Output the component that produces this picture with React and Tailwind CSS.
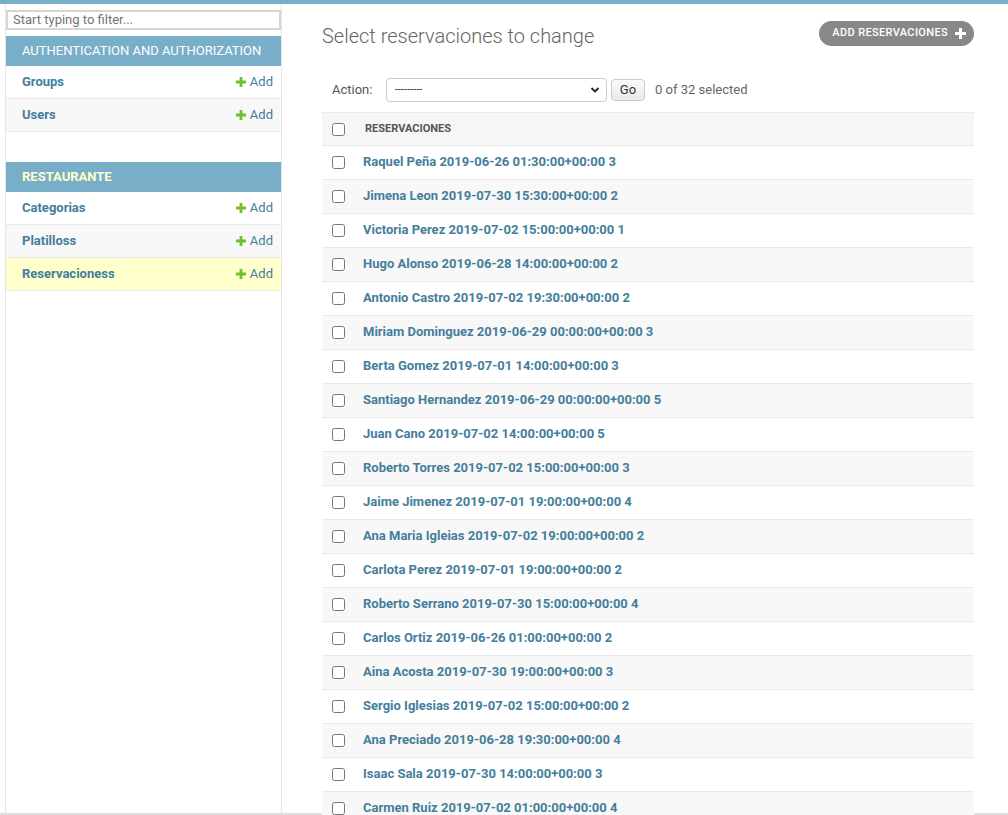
import React from "react";

const rows = [
  "Raquel Peña 2019-06-26 01:30:00+00:00 3",
  "Jimena Leon 2019-07-30 15:30:00+00:00 2",
  "Victoria Perez 2019-07-02 15:00:00+00:00 1",
  "Hugo Alonso 2019-06-28 14:00:00+00:00 2",
  "Antonio Castro 2019-07-02 19:30:00+00:00 2",
  "Miriam Dominguez 2019-06-29 00:00:00+00:00 3",
  "Berta Gomez 2019-07-01 14:00:00+00:00 3",
  "Santiago Hernandez 2019-06-29 00:00:00+00:00 5",
  "Juan Cano 2019-07-02 14:00:00+00:00 5",
  "Roberto Torres 2019-07-02 15:00:00+00:00 3",
  "Jaime Jimenez 2019-07-01 19:00:00+00:00 4",
  "Ana Maria Igleias 2019-07-02 19:00:00+00:00 2",
  "Carlota Perez 2019-07-01 19:00:00+00:00 2",
  "Roberto Serrano 2019-07-30 15:00:00+00:00 4",
  "Carlos Ortiz 2019-06-26 01:00:00+00:00 2",
  "Aina Acosta 2019-07-30 19:00:00+00:00 3",
  "Sergio Iglesias 2019-07-02 15:00:00+00:00 2",
  "Ana Preciado 2019-06-28 19:30:00+00:00 4",
  "Isaac Sala 2019-07-30 14:00:00+00:00 3",
  "Carmen Ruiz 2019-07-02 01:00:00+00:00 4",
];

function GreenPlus() {
  return (
    <svg width="10" height="10" viewBox="0 0 10 10" className="shrink-0">
      <path d="M3.6 0h2.8v3.6H10v2.8H6.4V10H3.6V6.4H0V3.6h3.6z" fill="#70bf2b" />
    </svg>
  );
}

function SideRow({ label, bg }) {
  return (
    <div className={`flex h-[33px] items-center justify-between border-b border-[#e8e8e8] pl-[16px] pr-[8px] ${bg}`}>
      <span className="text-[13px] font-bold text-[#447e9b]">{label}</span>
      <span className="flex items-center gap-[4px] text-[13px] text-[#447e9b]">
        <GreenPlus />
        Add
      </span>
    </div>
  );
}

export default function App() {
  return (
    <div className="flex h-[815px] flex-col overflow-hidden bg-white font-['Roboto',sans-serif] text-[13px] text-[#333]">
      <div className="h-[4px] shrink-0 bg-[#79aec8]" />
      <div className="flex min-h-0 flex-1 border-b-2 border-[#dedede]">
        <nav className="ml-[5px] w-[277px] shrink-0 border-l border-r border-[#e6e6e6]">
          <div className="pt-[6px]">
            <div className="flex h-[20px] items-center border-2 border-[#d6d6d6] bg-white pl-[5px] text-[13px] text-[#757575]">
              Start typing to filter...
            </div>
          </div>
          <div className="mt-[6px]">
            <div className="flex h-[30px] items-center bg-[#79aec8] pl-[16px] text-[13px] text-white">
              AUTHENTICATION AND AUTHORIZATION
            </div>
            <SideRow label="Groups" bg="bg-white" />
            <SideRow label="Users" bg="bg-[#f8f8f8]" />
          </div>
          <div className="mt-[30px]">
            <div className="flex h-[30px] items-center bg-[#79aec8] pl-[16px] text-[13px] font-bold text-[#ffffcc]">
              RESTAURANTE
            </div>
            <SideRow label="Categorias" bg="bg-white" />
            <SideRow label="Platilloss" bg="bg-[#f8f8f8]" />
            <SideRow label="Reservacioness" bg="bg-[#ffffcc]" />
          </div>
        </nav>

        <main className="min-w-0 flex-1 pl-[40px] pr-[34px] pt-[17px]">
          <div className="flex h-[27px] items-start justify-between">
            <h1 className="mt-[3px] text-[20px] font-light leading-[24px] text-[#666]">
              Select reservaciones to change
            </h1>
            <a className="flex h-[25px] items-center gap-[7px] rounded-full bg-[#888] pl-[13px] pr-[8px] text-[11px] font-medium tracking-[0.35px] text-white">
              ADD RESERVACIONES
              <svg width="11" height="11" viewBox="0 0 10 10">
                <path d="M3.6 0h2.8v3.6H10v2.8H6.4V10H3.6V6.4H0V3.6h3.6z" fill="#fff" />
              </svg>
            </a>
          </div>

          <div className="mt-[30px] flex h-[24px] items-center pl-[10px] text-[13px] text-[#555]">
            <span className="w-[54px]">Action:</span>
            <div className="flex h-[24px] w-[221px] items-center justify-between rounded-[4px] border border-[#ccc] bg-white pl-[8px] pr-[6px] text-[#333]">
              <span className="text-[11px]">---------</span>
              <svg width="10" height="10" viewBox="0 0 10 10">
                <path d="M1.5 3l3.5 3.5L8.5 3" fill="none" stroke="#222" strokeWidth="1.8" />
              </svg>
            </div>
            <div className="ml-[4px] flex h-[22px] w-[34px] items-center justify-center rounded-[4px] border border-[#ccc] bg-gradient-to-b from-[#fafafa] to-[#eaeaea] text-[13px] text-[#333]">
              Go
            </div>
            <span className="ml-[10px] text-[#666]">0 of 32 selected</span>
          </div>

          <div className="mt-[10px]">
            <div className="flex h-[34px] items-center border-y border-[#eaeaea] bg-[#f6f6f6] pt-[1px]">
              <div className="flex w-[31px] items-center pl-[10px]">
                <input type="checkbox" className="m-0 h-[13px] w-[13px]" readOnly />
              </div>
              <span className="pl-[12px] text-[11px] font-bold text-[#555]">RESERVACIONES</span>
            </div>
            {rows.map((r, i) => (
              <div
                key={i}
                className={`flex h-[34px] items-center border-b border-[#eaeaea] pb-[1px] ${i % 2 === 1 ? "bg-[#f8f8f8]" : "bg-white"}`}
              >
                <div className="flex w-[31px] items-center pl-[10px]">
                  <input type="checkbox" className="m-0 h-[13px] w-[13px]" readOnly />
                </div>
                <span className="pl-[10px] text-[13px] font-bold text-[#447e9b]">{r}</span>
              </div>
            ))}
          </div>
        </main>
      </div>
    </div>
  );
}
